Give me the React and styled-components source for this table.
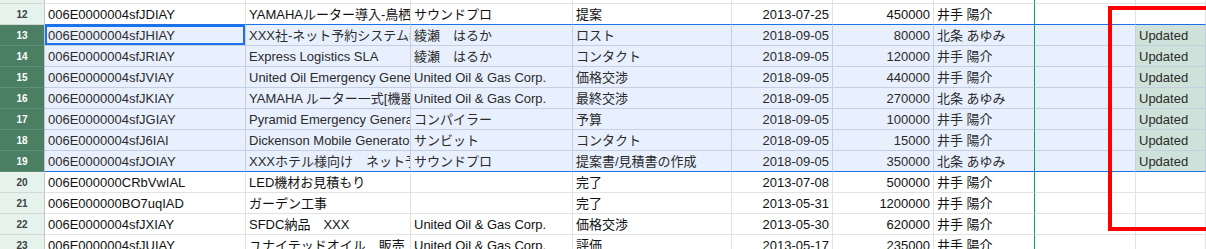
import React from 'react';
import styled, { createGlobalStyle } from 'styled-components';

const Global = createGlobalStyle`
  html, body { margin: 0; padding: 0; background: #fff; }
  body { font-family: "Liberation Sans", "Noto Sans CJK JP", Arial, sans-serif; }
`;

const COLS = '45px 201px 165px 162px 159px 101px 101px 101px 101px 1fr';

const Viewport = styled.div`
  position: relative;
  width: 1206px;
  height: 249px;
  overflow: hidden;
  background: #fff;
`;

const Sheet = styled.div`
  display: flex;
  flex-direction: column;
`;

const Row = styled.div`
  display: grid;
  grid-template-columns: ${COLS};
  height: ${p => p.$h}px;
`;

const Header = styled.div`
  box-sizing: border-box;
  display: flex;
  align-items: center;
  justify-content: center;
  background: ${p => (p.$sel ? '#4b7f64' : '#e6f2ec')};
  color: ${p => (p.$sel ? '#ffffff' : '#3c4043')};
  border-right: 1px solid #c4c7c5;
  border-bottom: 1px solid ${p => (p.$sel ? '#5f8f75' : '#d3d6d4')};
  font-size: 10px;
  font-weight: bold;
  font-family: "Liberation Sans", Arial, sans-serif;
`;

const gridColor = p => (p.$sel ? '#c6cfe2' : '#e2e2e2');

const Cell = styled.div`
  box-sizing: border-box;
  display: flex;
  align-items: center;
  justify-content: ${p => (p.$right ? 'flex-end' : 'flex-start')};
  padding: 0 3px 0 ${p => (p.$right ? '0' : '3px')};
  background: ${p => (p.$upd ? '#cfe2da' : p.$sel ? '#e8f0fe' : '#ffffff')};
  border-right: 1px solid ${p => (p.$green ? '#10a05a' : gridColor(p))};
  border-bottom: 1px solid ${p => (p.$edge ? '#1a73e8' : gridColor(p))};
  box-shadow: ${p => (p.$active ? 'inset 0 0 0 2px #1a73e8' : 'none')};
  overflow: hidden;
  white-space: nowrap;
  font-size: 13px;
  line-height: 15px;
  color: ${p => (p.$sel ? '#2b2b2b' : '#111111')};
`;

const Marker = styled.div`
  position: absolute;
  left: 1108px;
  top: 6px;
  width: 200px;
  height: 225px;
  box-sizing: border-box;
  border: 4px solid #ff0000;
  border-right: none;
  pointer-events: none;
`;

const rows = [
  { n: 12, c: ['006E0000004sfJDIAY', 'YAMAHAルーター導入-鳥栖工場', 'サウンドプロ', '提案', '2013-07-25', '450000', '井手 陽介', '', ''] },
  { n: 13, c: ['006E0000004sfJHIAY', 'XXX社-ネット予約システム導入', '綾瀬　はるか', 'ロスト', '2018-09-05', '80000', '北条 あゆみ', '', 'Updated'] },
  { n: 14, c: ['006E0000004sfJRIAY', 'Express Logistics SLA', '綾瀬　はるか', 'コンタクト', '2018-09-05', '120000', '井手 陽介', '', 'Updated'] },
  { n: 15, c: ['006E0000004sfJVIAY', 'United Oil Emergency Generators', 'United Oil & Gas Corp.', '価格交渉', '2018-09-05', '440000', '井手 陽介', '', 'Updated'] },
  { n: 16, c: ['006E0000004sfJKIAY', 'YAMAHA ルーター一式[機器]', 'United Oil & Gas Corp.', '最終交渉', '2018-09-05', '270000', '北条 あゆみ', '', 'Updated'] },
  { n: 17, c: ['006E0000004sfJGIAY', 'Pyramid Emergency Generators', 'コンパイラー', '予算', '2018-09-05', '100000', '井手 陽介', '', 'Updated'] },
  { n: 18, c: ['006E0000004sfJ6IAI', 'Dickenson Mobile Generators', 'サンビット', 'コンタクト', '2018-09-05', '15000', '井手 陽介', '', 'Updated'] },
  { n: 19, c: ['006E0000004sfJOIAY', 'XXXホテル様向け　ネット予約', 'サウンドプロ', '提案書/見積書の作成', '2018-09-05', '350000', '北条 あゆみ', '', 'Updated'] },
  { n: 20, c: ['006E000000CRbVwIAL', 'LED機材お見積もり', '', '完了', '2013-07-08', '500000', '井手 陽介', '', ''] },
  { n: 21, c: ['006E000000BO7uqIAD', 'ガーデン工事', '', '完了', '2013-05-31', '1200000', '井手 陽介', '', ''] },
  { n: 22, c: ['006E0000004sfJXIAY', 'SFDC納品　XXX', 'United Oil & Gas Corp.', '価格交渉', '2013-05-30', '620000', '井手 陽介', '', ''] },
  { n: 23, c: ['006E0000004sfJUIAY', 'ユナイテッドオイル　販売', 'United Oil & Gas Corp.', '評価', '2013-05-17', '235000', '井手 陽介', '', ''] },
];

const RIGHT = [4, 5];

function SheetRow({ n, c, h = 21, stub }) {
  const sel = n >= 13 && n <= 19;
  const edge = n === 12 || n === 19;
  return (
    <Row $h={h}>
      <Header $sel={sel}>{stub ? '' : n}</Header>
      {c.map((v, i) => (
        <Cell
          key={i}
          $sel={sel}
          $edge={edge}
          $right={RIGHT.includes(i)}
          $green={i === 6}
          $upd={v === 'Updated'}
          $active={n === 13 && i === 0}
        >
          {v}
        </Cell>
      ))}
    </Row>
  );
}

export default function App() {
  return (
    <>
      <Global />
      <Viewport>
        <Sheet>
          <SheetRow n={11} c={['', '', '', '', '', '', '', '', '']} h={4} stub />
          {rows.map(r => (
            <SheetRow key={r.n} n={r.n} c={r.c} />
          ))}
        </Sheet>
        <Marker />
      </Viewport>
    </>
  );
}
